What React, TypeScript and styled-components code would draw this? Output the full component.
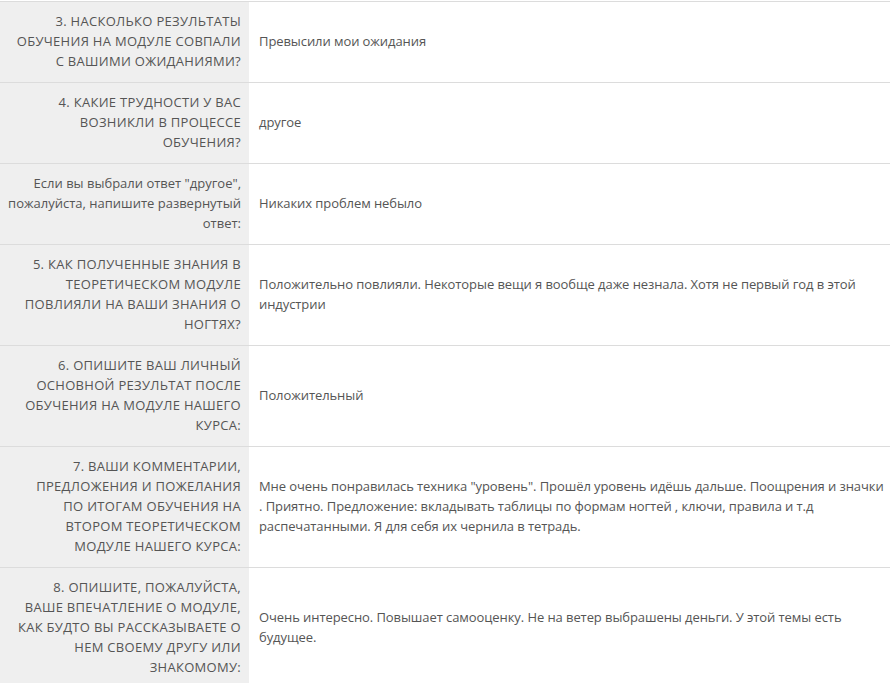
import { Fragment } from "react";
import { createGlobalStyle, styled } from "styled-components";

const GlobalStyle = createGlobalStyle`
  html, body {
    margin: 0;
    padding: 0;
    background: #fff;
  }
  body {
    font-family: "Open Sans", "Liberation Sans", sans-serif;
    color: #555;
  }
`;

interface Answer {
  question: string[];
  answer: string[];
  sub?: boolean;
}

// lines are split the same way the survey export shows them
const answers: Answer[] = [
  {
    question: ["3. Насколько результаты", "обучения на модуле совпали", "с вашими ожиданиями?"],
    answer: ["Превысили мои ожидания"],
  },
  {
    question: ["4. Какие трудности у вас", "возникли в процессе", "обучения?"],
    answer: ["другое"],
  },
  {
    question: ['Если вы выбрали ответ "другое",', "пожалуйста, напишите развернутый", "ответ:"],
    answer: ["Никаких проблем небыло"],
    sub: true,
  },
  {
    question: [
      "5. Как полученные знания в",
      "теоретическом модуле",
      "повлияли на ваши знания о",
      "ногтях?",
    ],
    answer: [
      "Положительно повлияли. Некоторые вещи я вообще даже незнала. Хотя не первый год в этой",
      "индустрии",
    ],
  },
  {
    question: [
      "6. Опишите ваш личный",
      "основной результат после",
      "обучения на модуле нашего",
      "курса:",
    ],
    answer: ["Положительный"],
  },
  {
    question: [
      "7. Ваши комментарии,",
      "предложения и пожелания",
      "по итогам обучения на",
      "втором теоретическом",
      "модуле нашего курса:",
    ],
    answer: [
      'Мне очень понравилась техника "уровень". Прошёл уровень идёшь дальше. Поощрения и значки',
      ". Приятно. Предложение: вкладывать таблицы по формам ногтей , ключи, правила и т.д",
      "распечатанными. Я для себя их чернила в тетрадь.",
    ],
  },
  {
    question: [
      "8. Опишите, пожалуйста,",
      "ваше впечатление о модуле,",
      "как будто вы рассказываете о",
      "нем своему другу или",
      "знакомому:",
    ],
    answer: [
      "Очень интересно. Повышает самооценку. Не на ветер выбрашены деньги. У этой темы есть",
      "будущее.",
    ],
  },
];

function Lines({ lines }: { lines: string[] }) {
  return (
    <>
      {lines.map((l, i) => (
        <Fragment key={i}>
          {i > 0 && <br />}
          {l}
        </Fragment>
      ))}
    </>
  );
}

export default function App() {
  return (
    <>
      <GlobalStyle />
      <Table>
        <tbody>
          {answers.map((a, i) => (
            <Row key={i}>
              <Label $sub={a.sub}>
                <Lines lines={a.question} />
              </Label>
              <Value>
                <Lines lines={a.answer} />
              </Value>
            </Row>
          ))}
        </tbody>
      </Table>
    </>
  );
}

const Table = styled.table`
  width: 890px;
  margin-top: 1px;
  border-collapse: collapse;
  table-layout: fixed;
  font-size: 13px;
  line-height: 20px;
`;

const Row = styled.tr`
  border-top: 1px solid #dcdcdc;
`;

const Label = styled.th<{ $sub?: boolean }>`
  width: 249px;
  box-sizing: border-box;
  padding: 9px 8px 11px 6px;
  background: #efefef;
  text-align: right;
  vertical-align: middle;
  font-weight: 400;
  white-space: nowrap;
  text-transform: ${(p) => (p.$sub ? "none" : "uppercase")};
  letter-spacing: ${(p) => (p.$sub ? "0" : "0.3px")};
`;

const Value = styled.td`
  padding: 9px 0 11px 10px;
  vertical-align: middle;
  white-space: nowrap;
  letter-spacing: -0.08px;
  overflow: hidden;
`;
